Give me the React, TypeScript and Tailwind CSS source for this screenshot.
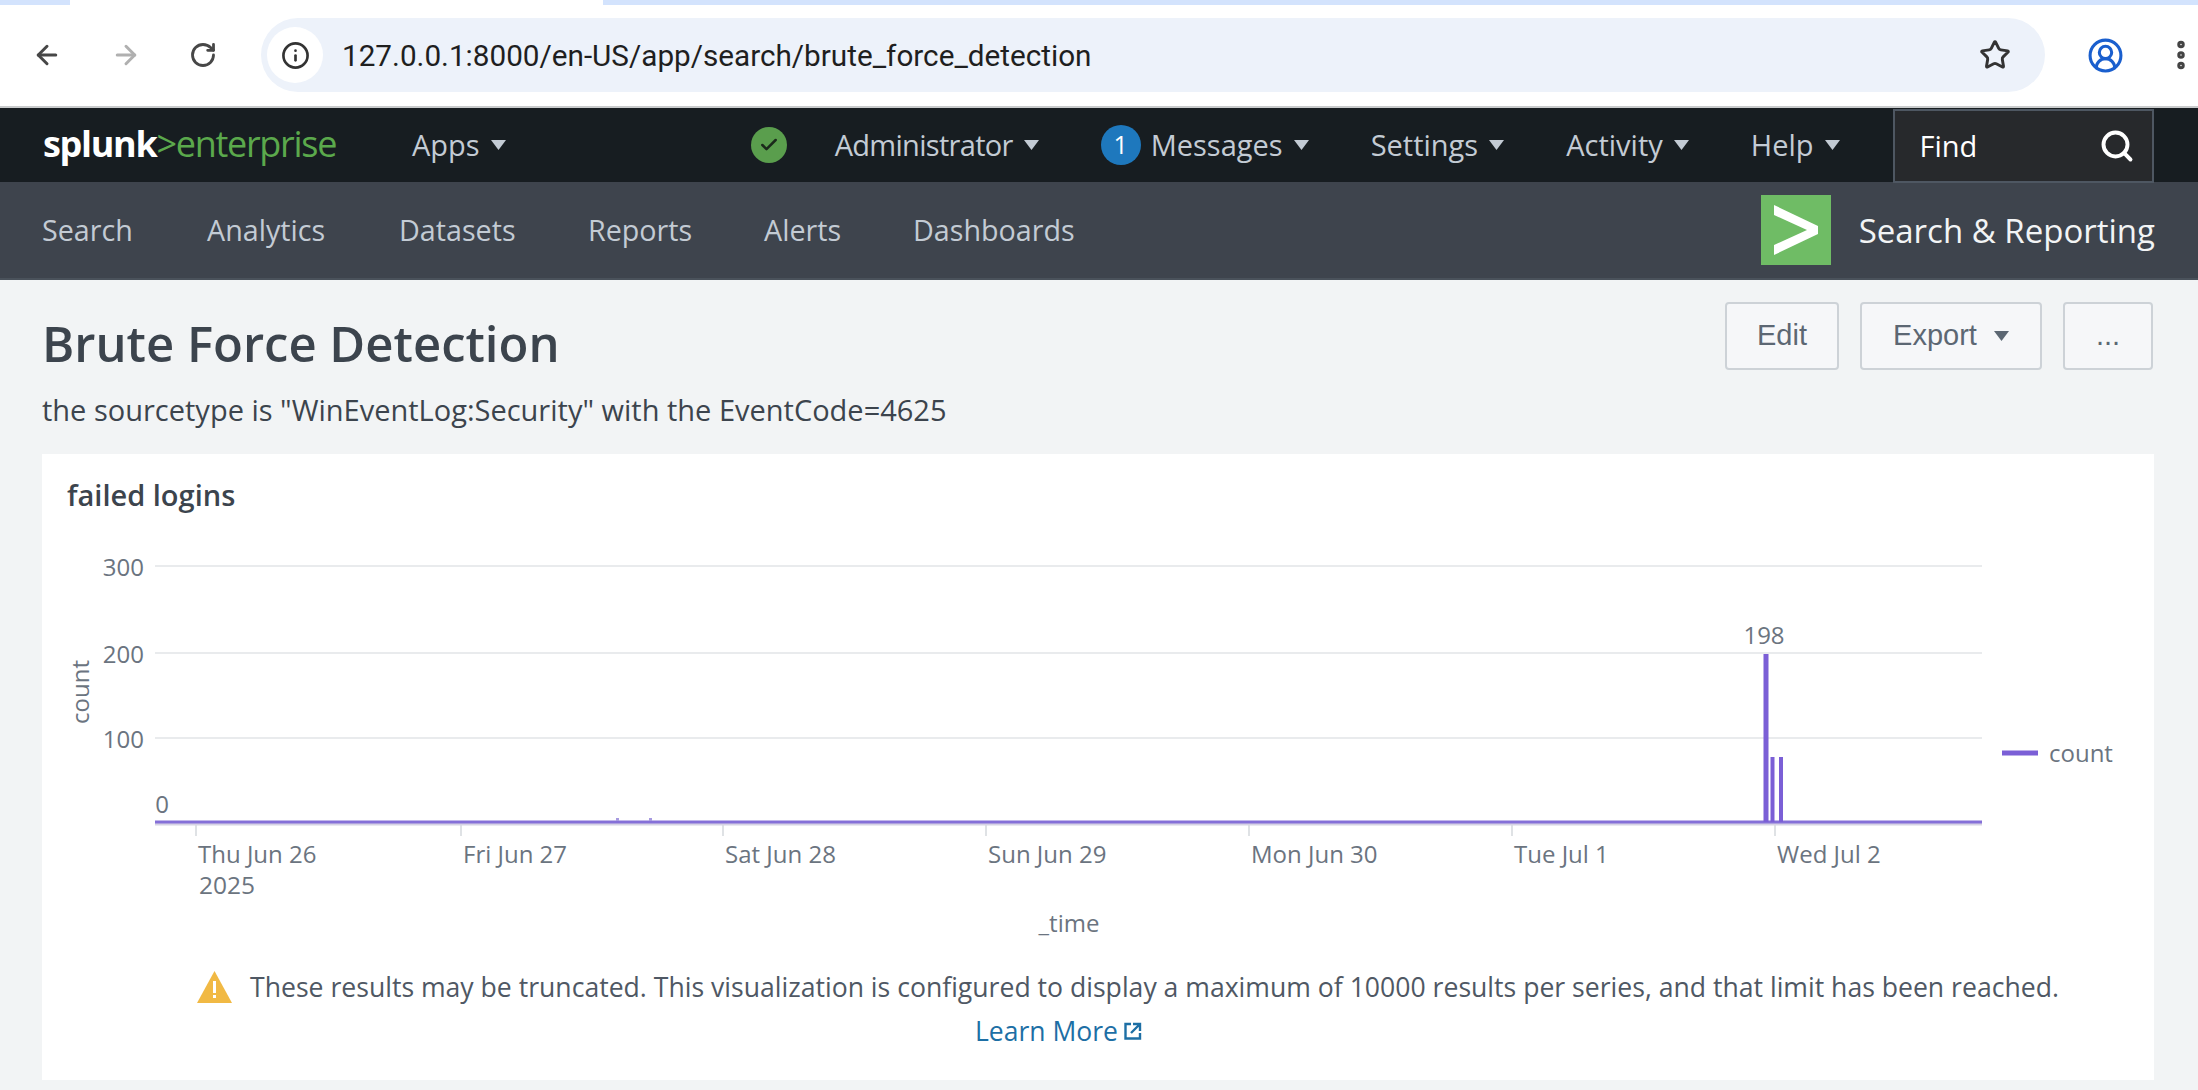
import {
  ArrowLeft,
  ArrowRight,
  Check,
  CircleUserRound,
  EllipsisVertical,
  Info,
  RotateCw,
  Search,
  Star,
} from "lucide-react";

const FONT = "[font-family:'Open_Sans','Noto_Sans',sans-serif]";

const NAV_LINKS = [
  { label: "Search", width: "w-[93px]" },
  { label: "Analytics", width: "w-[120px]" },
  { label: "Datasets", width: "w-[117px]" },
  { label: "Reports", width: "w-[104px]" },
  { label: "Alerts", width: "w-[77px]" },
  { label: "Dashboards", width: "w-[161px]" },
];

const X_TICKS = [
  { x: 196, label: "Thu Jun 26" },
  { x: 461, label: "Fri Jun 27" },
  { x: 723, label: "Sat Jun 28" },
  { x: 986, label: "Sun Jun 29" },
  { x: 1249, label: "Mon Jun 30" },
  { x: 1512, label: "Tue Jul 1" },
  { x: 1775, label: "Wed Jul 2" },
];

const Y_TICKS = [
  { y: 566, label: "300" },
  { y: 653, label: "200" },
  { y: 738, label: "100" },
];

function Caret({ color = "#c3cbd4" }: { color?: string }) {
  return (
    <svg width="15" height="10" viewBox="0 0 15 10" className="shrink-0">
      <polygon points="0,0 15,0 7.5,10" fill={color} />
    </svg>
  );
}

function MenuItem({ label, className }: { label: string; className?: string }) {
  return (
    <div className="flex items-center gap-[11px]">
      <span className={className}>{label}</span>
      <Caret />
    </div>
  );
}

function FailedLoginsChart() {
  return (
    <svg width="2112" height="425" viewBox="42 520 2112 425" className={`block ${FONT}`}>
      {Y_TICKS.map((t) => (
        <g key={t.label}>
          <line x1="155" x2="1982" y1={t.y} y2={t.y} stroke="#e9ebed" strokeWidth="2" />
          <text x="144" y={t.y + 10} textAnchor="end" fontSize="24" fill="#6b7480">
            {t.label}
          </text>
        </g>
      ))}
      <text x="169" y="813" textAnchor="end" fontSize="24" fill="#6b7480">
        0
      </text>
      <text
        x="89"
        y="692"
        textAnchor="middle"
        fontSize="24"
        fill="#6b7480"
        transform="rotate(-90 89 692)"
      >
        count
      </text>

      {X_TICKS.map((t) => (
        <g key={t.label}>
          <line x1={t.x} x2={t.x} y1="824" y2="836" stroke="#dfe2e5" strokeWidth="2" />
          <text x={t.x + 2} y="863" fontSize="24" fill="#6b7480">
            {t.label}
          </text>
        </g>
      ))}
      <text x="199" y="894" fontSize="24.5" fill="#6b7480">
        2025
      </text>
      <text x="1069" y="932" textAnchor="middle" fontSize="24" fill="#6b7480">
        _time
      </text>

      <line x1="155" x2="1982" y1="824" y2="824" stroke="#d6d3e4" strokeWidth="3" />
      <line x1="155" x2="1982" y1="822" y2="822" stroke="#8570d8" strokeWidth="3" />
      <rect x="616" y="818" width="3" height="3" fill="#a79ae0" />
      <rect x="649" y="818" width="3" height="3" fill="#a79ae0" />
      <line x1="1766" x2="1766" y1="654" y2="822" stroke="#7b5fd6" strokeWidth="5" />
      <line x1="1772.5" x2="1772.5" y1="757" y2="822" stroke="#7b5fd6" strokeWidth="4" />
      <line x1="1781" x2="1781" y1="757" y2="822" stroke="#7b5fd6" strokeWidth="4" />
      <text x="1764" y="644" textAnchor="middle" fontSize="24" fill="#6b7480">
        198
      </text>

      <line x1="2002" x2="2038" y1="753" y2="753" stroke="#7b5fd6" strokeWidth="5" />
      <text x="2049" y="762" fontSize="24" fill="#6b7480">
        count
      </text>
    </svg>
  );
}

export default function App() {
  return (
    <div className={`flex h-[1090px] w-[2198px] flex-col overflow-hidden bg-[#f2f4f5] ${FONT}`}>
      {/* Browser chrome */}
      <div className="h-[108px] shrink-0 border-b-2 border-[#c9cbcc] bg-white">
        <div className="flex h-[5px]">
          <div className="w-[70px] bg-[#d3e3fd]" />
          <div className="w-[533px] bg-white" />
          <div className="flex-1 bg-[#d3e3fd]" />
        </div>
        <div className="flex h-[101px] items-start pt-[13px]">
          <div className="flex h-[74px] w-[261px] shrink-0 items-center pl-[32px] text-[#474747]">
            <ArrowLeft className="h-[30px] w-[30px]" strokeWidth={2.4} />
            <ArrowRight className="ml-[49px] h-[30px] w-[30px] text-[#b0b0b0]" strokeWidth={2.4} />
            <RotateCw className="ml-[48px] h-[28px] w-[28px]" strokeWidth={2.4} />
          </div>
          <div className="flex h-[74px] w-[1784px] shrink-0 items-center rounded-full bg-[#edf2fa] pl-[6px] pr-[34px]">
            <div className="flex h-[56px] w-[56px] items-center justify-center rounded-full bg-white">
              <Info className="h-[29px] w-[29px] text-[#333]" strokeWidth={2.2} />
            </div>
            <span className="ml-[19px] pt-[3px] text-[29.7px] text-[#1f1f1f] [font-family:'Roboto',sans-serif]">
              127.0.0.1:8000/en-US/app/search/brute_force_detection
            </span>
            <Star className="ml-auto h-[32px] w-[32px] text-[#333]" strokeWidth={2.2} />
          </div>
          <div className="flex h-[74px] flex-1 items-center pl-[42px]">
            <CircleUserRound className="h-[37px] w-[37px] text-[#1a5fce]" strokeWidth={2} />
            <EllipsisVertical className="ml-[39px] h-[36px] w-[36px] shrink-0 text-[#444]" strokeWidth={3} />
          </div>
        </div>
      </div>

      {/* Splunk bar */}
      <div className="flex h-[74px] shrink-0 items-center bg-[#171d21] pl-[43px] text-[29px] text-[#c3cbd4]">
        <div className="flex w-[369px] items-baseline pb-[2px] text-[36px] leading-none tracking-[-1.3px]">
          <span className="font-bold text-white">splunk</span>
          <span className="text-[#5ba94c]">&gt;enterprise</span>
        </div>
        <MenuItem label="Apps" />
        <div className="ml-[245px] flex h-[36px] w-[36px] items-center justify-center rounded-full bg-[#5a9e4d]">
          <Check className="h-[20px] w-[20px] text-[#1b2a1b]" strokeWidth={3} />
        </div>
        <div className="ml-[48px]">
          <MenuItem label="Administrator" className="tracking-[-0.7px]" />
        </div>
        <div className="ml-[62px] flex items-center gap-[10px]">
          <div className="flex h-[40px] w-[40px] items-center justify-center rounded-full bg-[#1e78bd] text-[25px] text-white">
            1
          </div>
          <MenuItem label="Messages" />
        </div>
        <div className="ml-[62px]">
          <MenuItem label="Settings" />
        </div>
        <div className="ml-[62px]">
          <MenuItem label="Activity" />
        </div>
        <div className="ml-[62px]">
          <MenuItem label="Help" />
        </div>
        <div className="ml-[53px] flex h-[74px] w-[261px] translate-y-[1px] items-center justify-between border-2 border-[#4e5762] bg-[#27292c] pl-[25px] pr-[17px] text-white">
          <span>Find</span>
          <Search className="h-[36px] w-[36px]" strokeWidth={2.6} />
        </div>
      </div>

      {/* App bar */}
      <div className="flex h-[98px] shrink-0 items-center border-b-2 border-[#4a525b] bg-[#3e444d] pl-[42px] pr-[43px] text-[28.7px] text-[#c3cbd4]">
        <div className="flex gap-[72px]">
          {NAV_LINKS.map((link) => (
            <span key={link.label} className={`${link.width} whitespace-nowrap`}>
              {link.label}
            </span>
          ))}
        </div>
        <div className="ml-auto flex items-center gap-[28px] text-[33px] text-[#f2f4f5]">
          <div className="flex h-[70px] w-[70px] items-center justify-center bg-[#6fbc65]">
            <svg width="44" height="50" viewBox="0 0 44 50">
              <polygon points="0,0 44,21 44,29 0,50 0,40 33,25 0,10" fill="#fff" />
            </svg>
          </div>
          <span className="pt-[2px]">Search &amp; Reporting</span>
        </div>
      </div>

      {/* Dashboard */}
      <div className="flex flex-1 flex-col pl-[42px] pr-[44px] pt-[22px]">
        <div className="flex items-start justify-between pr-[1px]">
          <div className="pt-[13px]">
            <h1 className="text-[49px] font-semibold leading-[56px] text-[#3c444d]">
              Brute Force Detection
            </h1>
            <p className="mt-[21px] text-[29px] leading-[36px] text-[#3c444d]">
              the sourcetype is "WinEventLog:Security" with the EventCode=4625
            </p>
          </div>
          <div className="flex gap-[21px] text-[29px] text-[#5c6773] [font-family:'Liberation_Sans',sans-serif]">
            <div className="flex h-[68px] w-[114px] items-center justify-center rounded-[4px] border-2 border-[#cdd2d7] bg-[#f6f7f9]">
              Edit
            </div>
            <div className="flex h-[68px] w-[182px] items-center justify-center gap-[17px] rounded-[4px] border-2 border-[#cdd2d7] bg-[#f6f7f9]">
              Export
              <Caret color="#5c6773" />
            </div>
            <div className="flex h-[68px] w-[90px] items-center justify-center rounded-[4px] border-2 border-[#cdd2d7] bg-[#f6f7f9]">
              ...
            </div>
          </div>
        </div>

        <div className="mt-[26px] h-[626px] bg-white">
          <div className="pl-[25px] pt-[24px] text-[29px] font-semibold leading-[34px] text-[#3c444d]">
            failed logins
          </div>
          <div className="mt-[8px]">
            <FailedLoginsChart />
          </div>
          <div className="mt-[24px] flex items-center gap-[18px] pl-[155px] text-[26.6px] leading-[36px] text-[#4f5864]">
            <svg width="35" height="32" viewBox="0 0 35 32" className="shrink-0">
              <polygon points="17.5,0 35,32 0,32" fill="#f1b944" />
              <rect x="16" y="10" width="3" height="12" fill="#fff" />
              <rect x="16" y="24" width="3" height="3" fill="#fff" />
            </svg>
            <span>
              These results may be truncated. This visualization is configured to display a maximum
              of 10000 results per series, and that limit has been reached.
            </span>
          </div>
          <div className="mt-[8px] flex items-center gap-[6px] pl-[933px] text-[26.5px] leading-[36px] text-[#1d6fa5]">
            Learn More
            <svg width="18" height="18" viewBox="0 0 18 18" fill="none" stroke="#1d6fa5" strokeWidth="2.4">
              <path d="M7 2H1.5v14.5H16V11" />
              <path d="M9 2h7v7M16 2L7 11" />
            </svg>
          </div>
        </div>
      </div>
    </div>
  );
}
